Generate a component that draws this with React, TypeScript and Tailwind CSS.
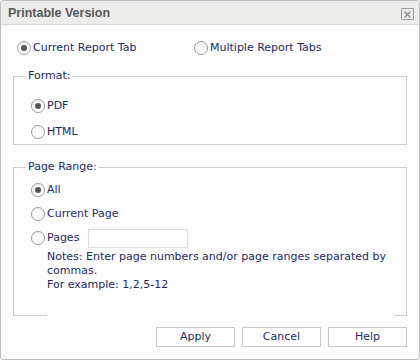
import { useState } from 'react';

function Radio({ checked, label, onClick }: { checked: boolean; label: string; onClick?: () => void }) {
  return (
    <label className="flex items-center h-[14px] cursor-pointer" onClick={onClick}>
      <span className="w-[14px] h-[14px] rounded-full border border-[#9a9a9a] bg-gradient-to-b from-[#f4f4f4] to-white flex items-center justify-center">
        {checked && <span className="w-[6px] h-[6px] rounded-full bg-[#555]"></span>}
      </span>
      <span className="ml-[2px]">{label}</span>
    </label>
  );
}

export default function App() {
  const [scope, setScope] = useState('current');
  const [format, setFormat] = useState('pdf');
  const [range, setRange] = useState('all');

  return (
    <div
      className="w-[420px] h-[360px] bg-white text-[11px] leading-[14px] text-[#1f2a5c]"
      style={{ fontFamily: '"DejaVu Sans", Verdana, sans-serif' }}
    >
      <div className="w-full h-full border border-[#bcbcbc] rounded-[3px] bg-[#fcfdfc] flex flex-col overflow-hidden">
        {/* title bar */}
        <div className="h-[24px] shrink-0 bg-[#ececeb] border-b border-[#d4d4d4] flex items-center justify-between pl-[7px] pr-[5px]">
          <span
            className="font-bold text-[12.5px] text-[#595959]"
            style={{ fontFamily: '"Liberation Sans", Arial, sans-serif' }}
          >
            Printable Version
          </span>
          <span className="w-[13px] h-[12px] border border-[#9c9c9c] rounded-[1px] flex items-center justify-center mt-[3px]">
            <svg width="7" height="7" viewBox="0 0 7 7">
              <path d="M0.5 0.5L6.5 6.5M6.5 0.5L0.5 6.5" stroke="#8a8a8a" strokeWidth="1.3" />
            </svg>
          </span>
        </div>

        <div className="px-[12px] flex flex-col">
          {/* scope */}
          <div className="flex items-center pl-[4px] mt-[16px] h-[14px]">
            <div className="w-[177px]">
              <Radio checked={scope === 'current'} label="Current Report Tab" onClick={() => setScope('current')} />
            </div>
            <Radio checked={scope === 'multiple'} label="Multiple Report Tabs" onClick={() => setScope('multiple')} />
          </div>

          {/* format */}
          <fieldset className="border border-[#cccccc] mt-[14px] h-[76px] px-0 pl-[17px]">
            <legend className="ml-[-5px] px-[2px] leading-[14px]">Format:</legend>
            <div className="flex flex-col gap-[12px] mt-[16px]">
              <Radio checked={format === 'pdf'} label="PDF" onClick={() => setFormat('pdf')} />
              <Radio checked={format === 'html'} label="HTML" onClick={() => setFormat('html')} />
            </div>
          </fieldset>

          {/* page range */}
          <fieldset className="border-x border-t border-[#cccccc] mt-[15px] h-[155px] pl-[17px]">
            <legend className="ml-[-5px] px-[2px] leading-[14px]">Page Range:</legend>
            <div className="flex flex-col gap-[10px] mt-[9px]">
              <Radio checked={range === 'all'} label="All" onClick={() => setRange('all')} />
              <Radio checked={range === 'current'} label="Current Page" onClick={() => setRange('current')} />
              <div className="flex items-center h-[14px]">
                <Radio checked={range === 'pages'} label="Pages" onClick={() => setRange('pages')} />
                <input className="ml-[9px] w-[100px] h-[19px] shrink-0 border border-[#dedede] bg-white outline-none px-1 text-[11px]" />
              </div>
            </div>
            <div className="pl-[16px] mt-[5px] pr-[14px]">
              <p>Notes: Enter page numbers and/or page ranges separated by commas.</p>
              <p>For example: 1,2,5-12</p>
            </div>
          </fieldset>
          <div className="flex h-[1px]">
            <div className="w-[34px] bg-[#cccccc]"></div>
            <div className="flex-1"></div>
            <div className="w-[12px] bg-[#cccccc]"></div>
          </div>

          {/* buttons */}
          <div className="flex justify-end gap-[7px] mt-[11px]">
            <button className="w-[79px] h-[20px] border border-[#c8c8c8] bg-white text-[#1f2a5c]">Apply</button>
            <button className="w-[79px] h-[20px] border border-[#c8c8c8] bg-white text-[#1f2a5c]">Cancel</button>
            <button className="w-[79px] h-[20px] border border-[#c8c8c8] bg-white text-[#1f2a5c]">Help</button>
          </div>
        </div>
      </div>
    </div>
  );
}
